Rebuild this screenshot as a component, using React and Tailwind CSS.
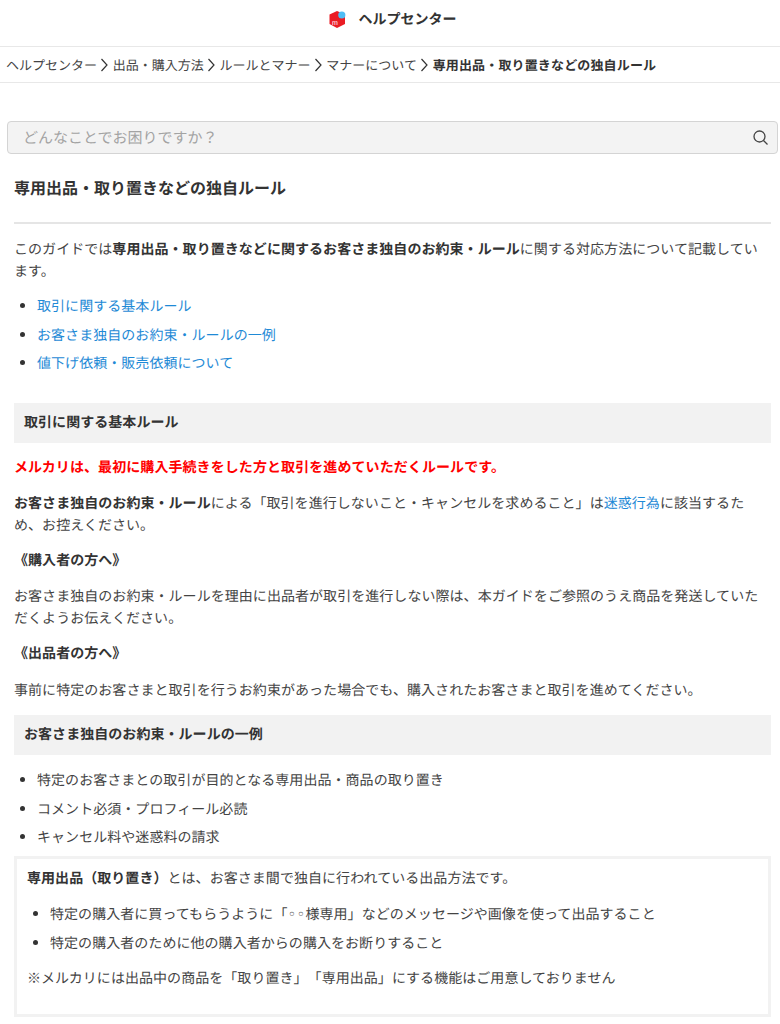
const FONT = "font-['Noto_Sans_CJK_JP','Noto_Sans',sans-serif]";

function Logo() {
  return (
    <svg width="19" height="19" viewBox="0 0 19 19" className="shrink-0">
      <path d="M9 1 L17 4.5 V14 L9 18 L1.5 14 V4.5 Z" fill="#ea1c24" />
      <circle cx="13.8" cy="5" r="3.6" fill="#4dbdf5" />
      <text x="4" y="14.5" fontSize="7" fill="#fff" fontFamily="Liberation Sans">m</text>
    </svg>
  );
}

function Sep() {
  return (
    <svg width="9" height="14" viewBox="0 0 9 14" className="shrink-0 ml-[3px] mr-[3.75px]">
      <path d="M1.5 1 L7 7 L1.5 13" fill="none" stroke="#333" strokeWidth="1.2" />
    </svg>
  );
}

function Heading({ children, className = "" }) {
  return (
    <h2 className={`bg-[#f2f2f2] h-10 flex items-center px-[10px] pb-[2px] text-sm font-bold text-[#333] ${className}`}>
      {children}
    </h2>
  );
}

function Bullets({ items, className = "" }) {
  return (
    <ul className={`list-disc pl-[23px] ${className}`}>
      {items.map((it, i) => (
        <li key={i} className="h-[28.7px] leading-[28.7px] marker:text-[#333]">{it}</li>
      ))}
    </ul>
  );
}

const Link = ({ children }) => <a className="text-[#1f8ad6]">{children}</a>;
const Dot = () => <span className="inline-block w-[9px] text-center font-['DejaVu_Sans'] text-[14px] leading-none">◦</span>;

export default function App() {
  return (
    <div className={`${FONT} [text-spacing-trim:space-all] [text-rendering:geometricPrecision] bg-white text-sm tracking-[0.05px] text-[#444] w-[780px] h-[1024px] overflow-hidden`}>
      <header className="h-[47px] border-b border-[#e8e8e8] flex items-center justify-center gap-[12px] pb-[8px] pl-[4px]">
        <Logo />
        <span className="font-bold text-sm text-[#333] tracking-normal">ヘルプセンター</span>
      </header>
      <nav className="h-[36px] border-b border-[#e8e8e8] flex items-center pl-[6px] pt-[1px] text-[13px] tracking-normal text-[#444]">
        <span>ヘルプセンター</span><Sep />
        <span>出品・購入方法</span><Sep />
        <span>ルールとマナー</span><Sep />
        <span>マナーについて</span><Sep />
        <span className="font-bold text-[#333] tracking-[0.15px]">専用出品・取り置きなどの独自ルール</span>
      </nav>
      <div className="mt-[38px] ml-[7px] w-[771px] h-[33px] bg-[#f3f3f3] border border-[#d4d4d4] rounded-[4px] flex items-center justify-between pl-[15px] pr-[8px]">
        <span className="text-[15px] tracking-normal text-[#a3a3a3]">どんなことでお困りですか？</span>
        <svg width="17" height="17" viewBox="0 0 17 17">
          <circle cx="7.5" cy="7.5" r="5.5" fill="none" stroke="#444" strokeWidth="1.3" />
          <path d="M11.5 11.5 L15.5 15.5" stroke="#444" strokeWidth="1.3" />
        </svg>
      </div>
      <main className="pl-[14px] w-[771px]">
        <div className="w-[757px]">
          <h1 className="mt-[21px] h-[24px] leading-[24px] text-base font-bold tracking-normal text-[#333]">専用出品・取り置きなどの独自ルール</h1>
          <hr className="mt-[23px] border-0 h-[2px] bg-[#e5e5e5]" />
          <p className="mt-[14px] leading-[22px] w-[746px]">
            このガイドでは<b className="text-[#333]">専用出品・取り置きなどに関するお客さま独自のお約束・ルール</b>に関する対応方法について記載しています。
          </p>
          <Bullets
            className="mt-[10px]"
            items={[
              <Link>取引に関する基本ルール</Link>,
              <Link>お客さま独自のお約束・ルールの一例</Link>,
              <Link>値下げ依頼・販売依頼について</Link>,
            ]}
          />
          <Heading className="mt-[25px]">取引に関する基本ルール</Heading>
          <p className="mt-[13px] leading-[22px] font-bold text-[#ff0000] tracking-[0.08px]">メルカリは、最初に購入手続きをした方と取引を進めていただくルールです。</p>
          <p className="mt-[14px] leading-[22px] w-[746px]">
            <b className="text-[#333]">お客さま独自のお約束・ルール</b>による「取引を進行しないこと・キャンセルを求めること」は<Link>迷惑行為</Link>に該当するため、お控えください。
          </p>
          <p className="mt-[13px] leading-[22px] font-bold text-[#333]">《購入者の方へ》</p>
          <p className="mt-[14px] leading-[22px] w-[746px]">お客さま独自のお約束・ルールを理由に出品者が取引を進行しない際は、本ガイドをご参照のうえ商品を発送していただくようお伝えください。</p>
          <p className="mt-[13px] leading-[22px] font-bold text-[#333]">《出品者の方へ》</p>
          <p className="mt-[15px] leading-[22px]">事前に特定のお客さまと取引を行うお約束があった場合でも、購入されたお客さまと取引を進めてください。</p>
          <Heading className="mt-[14px]">お客さま独自のお約束・ルールの一例</Heading>
          <Bullets
            className="mt-[11px]"
            items={["特定のお客さまとの取引が目的となる専用出品・商品の取り置き", "コメント必須・プロフィール必読", "キャンセル料や迷惑料の請求"]}
          />
          <div className="mt-[4px] h-[161px] border-[3px] border-[#f2f2f2] pl-[10px] pt-[8px]">
            <p className="leading-[22px]"><b className="text-[#333]">専用出品（取り置き）</b>とは、お客さま間で独自に行われている出品方法です。</p>
            <Bullets
              className="mt-[11px]"
              items={[<>特定の購入者に買ってもらうように「<Dot /><Dot />様専用」などのメッセージや画像を使って出品すること</>, "特定の購入者のために他の購入者からの購入をお断りすること"]}
            />
            <p className="mt-[9px] leading-[22px]">※メルカリには出品中の商品を「取り置き」「専用出品」にする機能はご用意しておりません</p>
          </div>
        </div>
      </main>
    </div>
  );
}
